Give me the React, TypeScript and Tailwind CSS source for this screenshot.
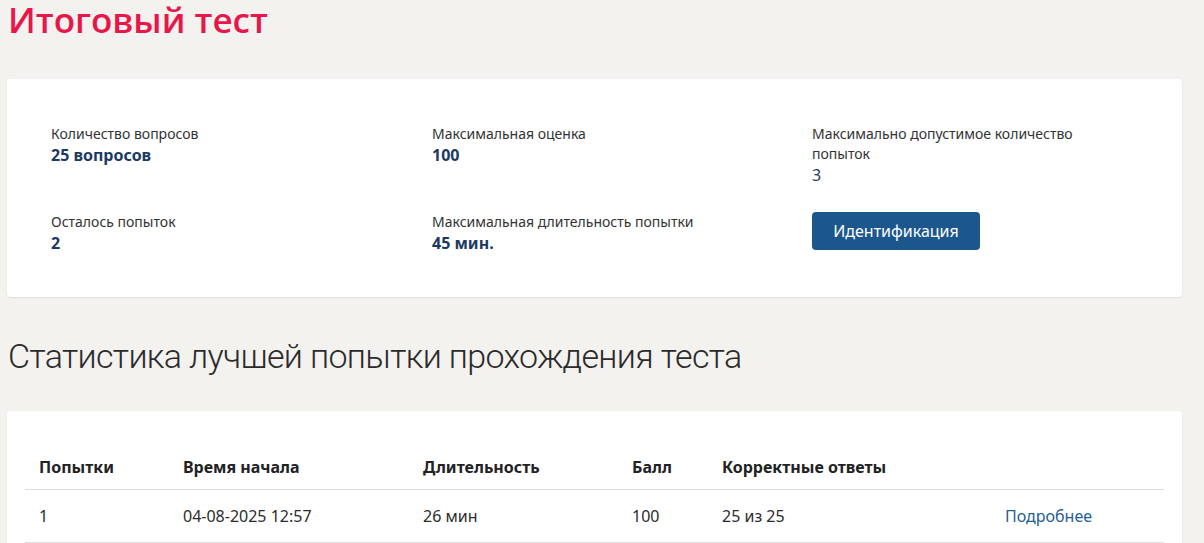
export default function App() {
  const sans = { fontFamily: '"Noto Sans", "Open Sans", sans-serif' };
  return (
    <div className="min-h-screen bg-[#f3f2ef] pl-[7px] pr-[22px] pt-[4px]" style={sans}>
      <h1
        className="pl-[1px] text-[35px] leading-[32px] font-semibold text-[#e8174a]"
        style={{ fontFamily: '"Open Sans", sans-serif' }}
      >
        Итоговый тест
      </h1>

      <div className="mt-[43px] rounded-[4px] bg-white pl-[44px] pr-[44px] pt-[45px] pb-[43px] shadow-[0_1px_2px_rgba(0,0,0,0.08)]">
        <div className="grid grid-cols-[381px_380px_1fr] gap-y-[26px]">
          <div>
            <div className="text-[14px] leading-[20px] text-[#333]">Количество вопросов</div>
            <div className="text-[16px] leading-[22px] font-bold text-[#1b3a63]">25 вопросов</div>
          </div>
          <div>
            <div className="text-[14px] leading-[20px] text-[#333]">Максимальная оценка</div>
            <div className="text-[16px] leading-[22px] font-bold text-[#1b3a63]">100</div>
          </div>
          <div>
            <div className="max-w-[290px] text-[14px] leading-[20px] text-[#333]">
              Максимально допустимое количество попыток
            </div>
            <div className="text-[16px] leading-[22px] text-[#1b3a63]">3</div>
          </div>
          <div>
            <div className="text-[14px] leading-[20px] text-[#333]">Осталось попыток</div>
            <div className="text-[16px] leading-[22px] font-bold text-[#1b3a63]">2</div>
          </div>
          <div>
            <div className="text-[14px] leading-[20px] text-[#333]">Максимальная длительность попытки</div>
            <div className="text-[16px] leading-[22px] font-bold text-[#1b3a63]">45 мин.</div>
          </div>
          <div>
            <button className="h-[38px] w-[168px] rounded-[4px] bg-[#1b578c] text-[16px] text-white">
              Идентификация
            </button>
          </div>
        </div>
      </div>

      <h2
        className="mt-[39px] pl-[1px] text-[34px] leading-[40px] font-light tracking-[-0.65px] text-[#2b2b2b]"
        style={{ fontFamily: 'Roboto, sans-serif' }}
      >
        Статистика лучшей попытки прохождения теста
      </h2>

      <div className="mt-[35px] rounded-[4px] bg-white px-[18px] pt-[34px] pb-[20px] shadow-[0_1px_2px_rgba(0,0,0,0.08)]">
        <table className="w-full border-collapse text-left text-[16px] text-[#2b2b2b]">
          <colgroup>
            <col className="w-[158px]" />
            <col className="w-[240px]" />
            <col className="w-[209px]" />
            <col className="w-[90px]" />
            <col className="w-[283px]" />
            <col />
          </colgroup>
          <thead>
            <tr className="border-b border-[#dedede]">
              <th className="pl-[14px] py-[11px] leading-[22px] font-bold text-[#222]">Попытки</th>
              <th className="py-[11px] leading-[22px] font-bold text-[#222]">Время начала</th>
              <th className="py-[11px] leading-[22px] font-bold text-[#222]">Длительность</th>
              <th className="py-[11px] leading-[22px] font-bold text-[#222]">Балл</th>
              <th className="py-[11px] leading-[22px] font-bold text-[#222]">Корректные ответы</th>
              <th className="py-[11px] leading-[22px]"></th>
            </tr>
          </thead>
          <tbody>
            <tr className="border-b border-[#dedede]">
              <td className="pl-[14px] py-[15px] leading-[22px]">1</td>
              <td className="py-[15px] leading-[22px]">04-08-2025 12:57</td>
              <td className="py-[15px] leading-[22px]">26 мин</td>
              <td className="py-[15px] leading-[22px]">100</td>
              <td className="py-[15px] leading-[22px]">25 из 25</td>
              <td className="py-[15px] leading-[22px]">
                <a href="#" className="text-[#1f5e96]">Подробнее</a>
              </td>
            </tr>
          </tbody>
        </table>
      </div>
    </div>
  );
}
